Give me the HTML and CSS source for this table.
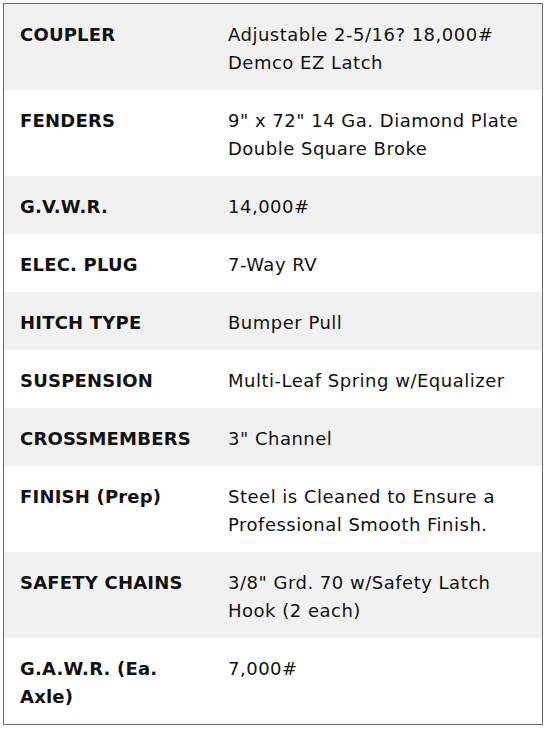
FILE: index.html
```html
<!DOCTYPE html>
<html>
<head>
<meta charset="utf-8">
<link rel="stylesheet" href="styles.css">
</head>
<body>
<div class="specs">
  <div class="row alt"><div class="label">COUPLER</div><div class="value">Adjustable 2-5/16? 18,000# Demco EZ Latch</div></div>
  <div class="row"><div class="label">FENDERS</div><div class="value">9" x 72" 14 Ga. Diamond Plate Double Square Broke</div></div>
  <div class="row alt"><div class="label">G.V.W.R.</div><div class="value">14,000#</div></div>
  <div class="row"><div class="label">ELEC. PLUG</div><div class="value">7-Way RV</div></div>
  <div class="row alt"><div class="label">HITCH TYPE</div><div class="value">Bumper Pull</div></div>
  <div class="row"><div class="label">SUSPENSION</div><div class="value">Multi-Leaf Spring w/Equalizer</div></div>
  <div class="row alt"><div class="label">CROSSMEMBERS</div><div class="value">3" Channel</div></div>
  <div class="row"><div class="label">FINISH (Prep)</div><div class="value">Steel is Cleaned to Ensure a Professional Smooth Finish.</div></div>
  <div class="row alt"><div class="label">SAFETY CHAINS</div><div class="value">3/8" Grd. 70 w/Safety Latch Hook (2 each)</div></div>
  <div class="row"><div class="label">G.A.W.R. (Ea. Axle)</div><div class="value">7,000#</div></div>
</div>
</body>
</html>
```
FILE: styles.css
```css
html, body {
  margin: 0;
  padding: 0;
  background: #fff;
}
body {
  padding: 3px;
  font-family: "DejaVu Sans", "Liberation Sans", sans-serif;
}
.specs {
  width: 538px;
  border: 1px solid #666;
}
.row {
  display: grid;
  grid-template-columns: 208px 1fr;
  background: #fff;
}
.row.alt {
  background: #f1f1f1;
}
.label, .value {
  padding: 17px 16px 13px;
  font-size: 18px;
  line-height: 28px;
  color: #111;
}
.label {
  font-weight: 700;
  letter-spacing: 0.2px;
}
.value {
  font-weight: 400;
  letter-spacing: 0.5px;
  padding-right: 20px;
}
```
